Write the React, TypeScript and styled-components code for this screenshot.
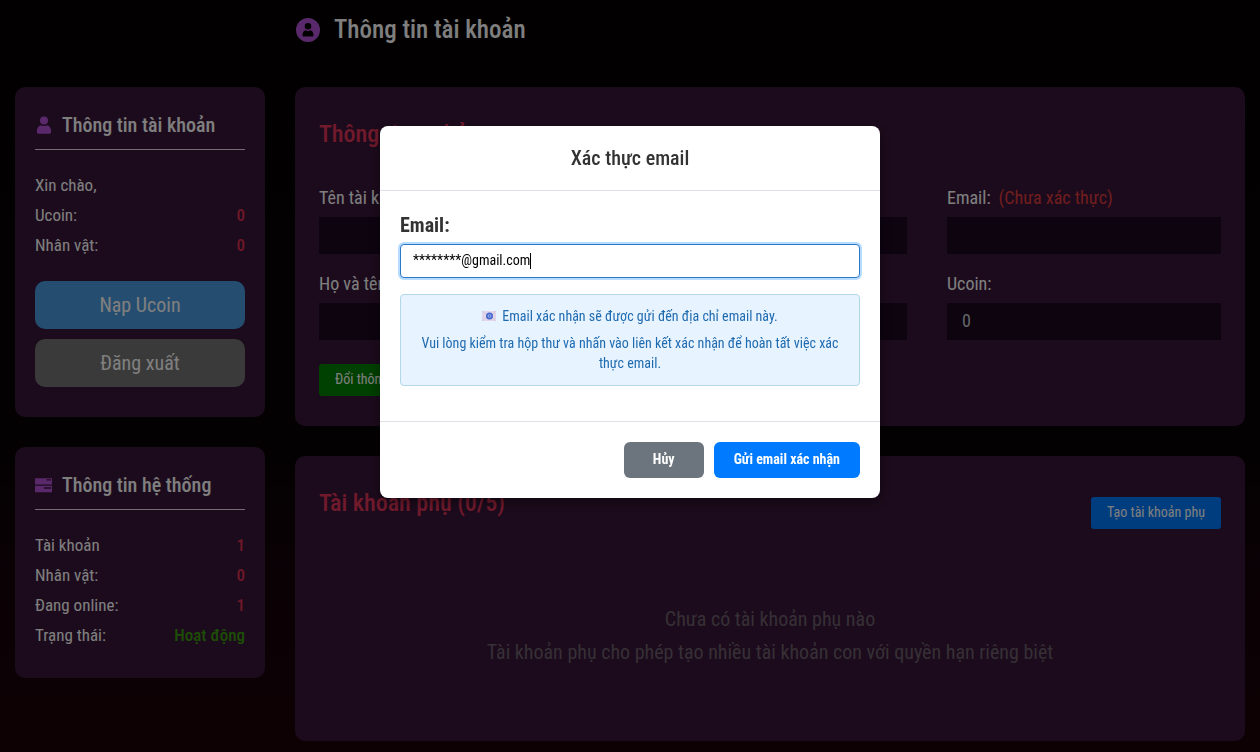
import React from "react";
import styled, { createGlobalStyle } from "styled-components";

const GlobalStyle = createGlobalStyle`
  * { box-sizing: border-box; }
  body {
    margin: 0;
    min-height: 100vh;
    background: linear-gradient(180deg, #040102 0%, #080304 60%, #14020a 76%, #1c0208 100%);
    color: #fff;
    font-family: "Roboto Condensed", "Liberation Sans Narrow", Roboto, sans-serif;
    font-size: 17px;
  }
  h1, h2, h3, p, dl, dd { margin: 0; }
  button, input { font-family: inherit; }
`;

const Page = styled.div`
  padding: 0 15px 10px;
`;

const PageHeader = styled.header`
  display: flex;
  align-items: center;
  gap: 14px;
  padding: 12px 0 39px 281px;

  svg { color: #b552d8; }
`;

const PageTitle = styled.h1`
  font-size: 25px;
  line-height: 36px;
  font-weight: 500;
`;

const Columns = styled.div`
  display: grid;
  grid-template-columns: 250px 1fr;
  gap: 30px;
  align-items: start;
`;

const Stack = styled.div`
  display: grid;
  gap: 30px;
`;

const SideCard = styled.section`
  padding: 20px 20px 28px;
  border-radius: 10px;
  background: #381638;
`;

const SideTitle = styled.h2`
  display: flex;
  align-items: center;
  gap: 9px;
  margin-bottom: 20px;
  padding-bottom: 6px;
  border-bottom: 1px solid #e6d8e6;
  font-size: 20px;
  line-height: 36px;
  font-weight: 500;

  svg { color: #b552d8; }
`;

const StatRow = styled.div`
  display: flex;
  justify-content: space-between;
  line-height: 30px;
`;

const StatValue = styled.dd<{ $online?: boolean }>`
  color: ${(p) => (p.$online ? "#389c0c" : "#dc3050")};
  font-weight: 500;
`;

const SideActions = styled.div`
  display: grid;
  gap: 10px;
  padding: 21px 0 2px;
`;

const SideButton = styled.button<{ $muted?: boolean }>`
  height: 48px;
  border: 0;
  border-radius: 10px;
  background: ${(p) => (p.$muted ? "#747474" : "#4a9ae0")};
  color: #fff;
  font-size: 20px;
`;

const MainCard = styled.section`
  padding: 24px 24px 30px;
  border-radius: 10px;
  background: #381638;
`;

const CardHeader = styled.div`
  display: flex;
  align-items: center;
  justify-content: space-between;
`;

const CardTitle = styled.h2`
  margin-bottom: 19px;
  color: #e03458;
  font-size: 24px;
  line-height: 46px;
  font-weight: 500;
`;

const FieldGrid = styled.div`
  display: grid;
  grid-template-columns: repeat(3, 1fr);
  gap: 16px 40px;
  padding: 8px 0 24px;
`;

const Field = styled.div`
  display: flex;
  flex-direction: column;
  gap: 6px;
  min-width: 0;
`;

const FieldLabel = styled.label`
  font-size: 18px;
  line-height: 27px;
`;

const Unverified = styled.span`
  margin-left: 8px;
  color: #e03c3c;
`;

const FieldInput = styled.input`
  width: 100%;
  height: 37px;
  padding: 0 15px 2px;
  border: 0;
  background: #1a0820;
  color: #ccc;
  font-size: 18px;
`;

const SmallButton = styled.button<{ $green?: boolean }>`
  height: 32px;
  padding: 0 16px 2px;
  border: 0;
  border-radius: 3px;
  background: ${(p) => (p.$green ? "#008000" : "#007bff")};
  color: #fff;
  font-size: 14px;
`;

const Empty = styled.div`
  padding: 58px 0 42px;
  color: #6c606c;
  font-size: 20px;
  line-height: 33px;
  text-align: center;
`;

const Overlay = styled.div`
  position: fixed;
  inset: 0;
  display: flex;
  align-items: flex-start;
  justify-content: center;
  padding: 126px 20px 20px;
  background: rgba(0, 0, 0, 0.5);
`;

const Dialog = styled.form`
  width: 100%;
  max-width: 500px;
  border-radius: 8px;
  background: #fff;
  color: #333;
  box-shadow: 0 4px 12px rgba(0, 0, 0, 0.4);
`;

const DialogTitle = styled.h2`
  padding: 17px 20px;
  border-bottom: 1px solid #dee2e6;
  font-size: 20px;
  line-height: 30px;
  font-weight: 500;
  text-align: center;
`;

const DialogBody = styled.div`
  padding: 20px 20px 35px;
`;

const DialogLabel = styled.label`
  display: block;
  margin-bottom: 5px;
  font-size: 20px;
  line-height: 28px;
  font-weight: 700;
`;

const EmailBox = styled.div`
  position: relative;
  margin-bottom: 16px;
`;

const EmailInput = styled.input`
  display: block;
  width: 100%;
  height: 34px;
  padding: 0 12px 2px;
  border: 1px solid #2a78c8;
  border-radius: 4px;
  background: #fff;
  box-shadow: 0 0 0 2px #b8dcff;
  color: #000;
  caret-color: transparent;
  font-size: 14px;
  outline: 0;
`;

const Caret = styled.span`
  position: absolute;
  top: 9px;
  left: 130px;
  width: 1px;
  height: 16px;
  background: #000;
`;

const Notice = styled.div`
  display: grid;
  gap: 7px;
  padding: 11px 16px 12px;
  border: 1px solid #b3d7e8;
  border-radius: 4px;
  background: #e7f3ff;
  color: #1f6bb0;
  font-size: 14px;
  line-height: 20px;
  text-align: center;

  svg { margin-right: 6px; vertical-align: -1px; }
`;

const DialogFooter = styled.div`
  display: flex;
  justify-content: flex-end;
  gap: 10px;
  padding: 20px;
  border-top: 1px solid #dee2e6;
`;

const DialogButton = styled.button<{ $primary?: boolean }>`
  min-width: 80px;
  height: 36px;
  padding: 0 20px 2px;
  border: 0;
  border-radius: 6px;
  background: ${(p) => (p.$primary ? "#007bff" : "#6c757d")};
  color: #fff;
  font-size: 14px;
  font-weight: 700;
`;

const AccountIcon = () => (
  <svg width="24" height="24" viewBox="0 0 24 24" aria-hidden="true">
    <path
      fill="currentColor"
      fillRule="evenodd"
      d="M12 0a12 12 0 1 1 0 24a12 12 0 1 1 0-24zM12 5a3.300 3.300 0 1 0 0 6.600a3.300 3.300 0 1 0 0-6.600zM9.300 12.200C7.400 12.900 6.500 14.800 6.500 17.200Q6.500 18.400 7.700 18.400H16.300Q17.500 18.400 17.500 17.200C17.500 14.800 16.600 12.900 14.700 12.200Q12 13.800 9.300 12.200z"
    />
  </svg>
);

const PersonIcon = () => (
  <svg width="18" height="18" viewBox="0 0 18 18" aria-hidden="true">
    <circle cx="9" cy="4.500" r="4" fill="currentColor" />
    <path
      fill="currentColor"
      d="M5.500 9.200Q9 10.600 12.500 9.200C15 10 16.200 12.600 16.200 15.800Q16.200 17.800 14.500 17.800H3.500Q1.800 17.800 1.800 15.800C1.800 12.600 3 10 5.500 9.200z"
    />
  </svg>
);

const ServerIcon = () => (
  <svg width="18" height="18" viewBox="0 0 18 18" aria-hidden="true">
    <path
      fill="currentColor"
      fillRule="evenodd"
      d="M0 2.300h17v6.300H0zM11.500 3.200v1.200h4.500v-1.200zM0 9.700h17v6.600H0zM9 11.200v1.500h7v-1.500z"
    />
  </svg>
);

const MailIcon = () => (
  <svg width="14" height="12" viewBox="0 0 14 12" aria-hidden="true">
    <rect x="0" y="1" width="14" height="10" fill="#e2d6ea" />
    <path d="M0 1l7 5 7-5M0 11l5-5M14 11L9 6" stroke="#d6cae2" fill="none" />
    <circle cx="7.500" cy="6" r="3.500" fill="#4668cc" />
    <circle cx="7.500" cy="6" r="1.400" fill="none" stroke="#a9bdf2" strokeWidth="0.900" />
  </svg>
);

type Stat = { label: string; value?: string; online?: boolean };

const accountStats: Stat[] = [
  { label: "Xin chào," },
  { label: "Ucoin:", value: "0" },
  { label: "Nhân vật:", value: "0" },
];

const systemStats: Stat[] = [
  { label: "Tài khoản", value: "1" },
  { label: "Nhân vật:", value: "0" },
  { label: "Đang online:", value: "1" },
  { label: "Trạng thái:", value: "Hoạt động", online: true },
];

const fields = [
  { id: "username", label: "Tên tài khoản:", value: "" },
  { id: "phone", label: "Số điện thoại:", value: "" },
  { id: "email", label: "Email:", value: "", note: "(Chưa xác thực)" },
  { id: "fullname", label: "Họ và tên:", value: "" },
  { id: "birthday", label: "Ngày sinh:", value: "" },
  { id: "ucoin", label: "Ucoin:", value: "0" },
];

const Stats = ({ items }: { items: Stat[] }) => (
  <dl>
    {items.map((s) => (
      <StatRow key={s.label}>
        <dt>{s.label}</dt>
        {s.value && <StatValue $online={s.online}>{s.value}</StatValue>}
      </StatRow>
    ))}
  </dl>
);

export default function App() {
  return (
    <>
      <GlobalStyle />
      <Page>
        <PageHeader>
          <AccountIcon />
          <PageTitle>Thông tin tài khoản</PageTitle>
        </PageHeader>
        <Columns>
          <Stack as="aside">
            <SideCard>
              <SideTitle>
                <PersonIcon />
                Thông tin tài khoản
              </SideTitle>
              <Stats items={accountStats} />
              <SideActions>
                <SideButton type="button">Nạp Ucoin</SideButton>
                <SideButton type="button" $muted>Đăng xuất</SideButton>
              </SideActions>
            </SideCard>
            <SideCard>
              <SideTitle>
                <ServerIcon />
                Thông tin hệ thống
              </SideTitle>
              <Stats items={systemStats} />
            </SideCard>
          </Stack>
          <Stack as="main">
            <MainCard>
              <CardTitle>Thông tin cơ bản</CardTitle>
              <FieldGrid>
                {fields.map((f) => (
                  <Field key={f.id}>
                    <FieldLabel htmlFor={f.id}>
                      {f.label}
                      {f.note && <Unverified>{f.note}</Unverified>}
                    </FieldLabel>
                    <FieldInput id={f.id} value={f.value} readOnly />
                  </Field>
                ))}
              </FieldGrid>
              <SmallButton type="button" $green>Đổi thông tin</SmallButton>
            </MainCard>
            <MainCard>
              <CardHeader>
                <CardTitle>Tài khoản phụ (0/5)</CardTitle>
                <SmallButton type="button">Tạo tài khoản phụ</SmallButton>
              </CardHeader>
              <Empty>
                <p>Chưa có tài khoản phụ nào</p>
                <p>Tài khoản phụ cho phép tạo nhiều tài khoản con với quyền hạn riêng biệt</p>
              </Empty>
            </MainCard>
          </Stack>
        </Columns>
      </Page>
      <Overlay>
        <Dialog role="dialog" aria-modal="true" aria-labelledby="verify-title">
          <DialogTitle id="verify-title">Xác thực email</DialogTitle>
          <DialogBody>
            <DialogLabel htmlFor="verify-email">Email:</DialogLabel>
            <EmailBox>
              <EmailInput id="verify-email" type="text" defaultValue="********@gmail.com" autoFocus />
              <Caret />
            </EmailBox>
            <Notice>
              <p>
                <MailIcon />
                Email xác nhận sẽ được gửi đến địa chỉ email này.
              </p>
              <p>Vui lòng kiểm tra hộp thư và nhấn vào liên kết xác nhận để hoàn tất việc xác thực email.</p>
            </Notice>
          </DialogBody>
          <DialogFooter>
            <DialogButton type="button">Hủy</DialogButton>
            <DialogButton type="submit" $primary>Gửi email xác nhận</DialogButton>
          </DialogFooter>
        </Dialog>
      </Overlay>
    </>
  );
}
